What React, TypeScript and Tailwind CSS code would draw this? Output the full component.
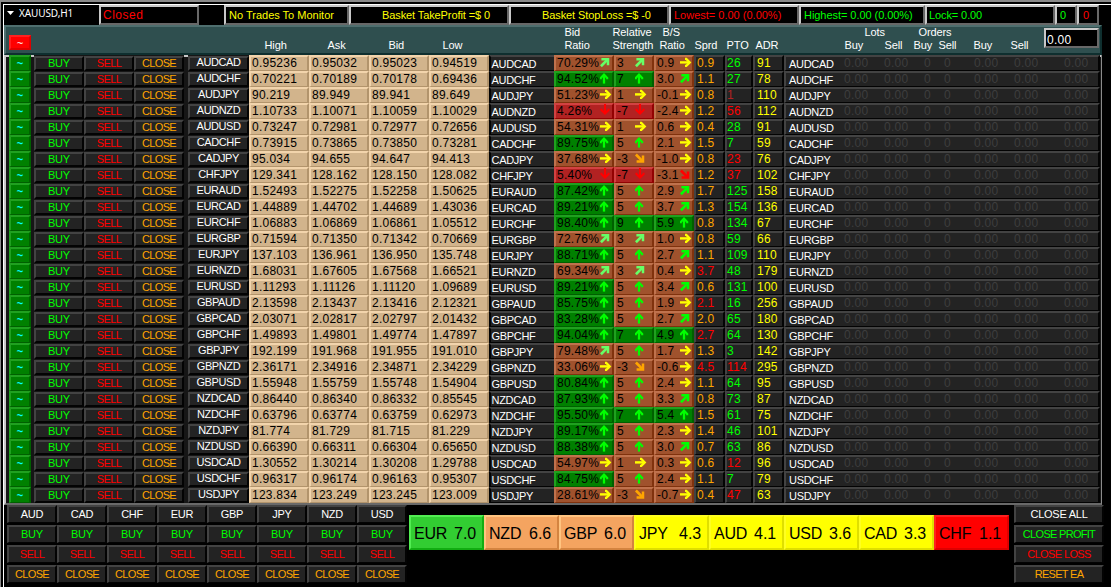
import React from "react";

type Row = [string, string, string, string, string, string, number, string, string, number, number];

const rows: Row[] = [
  ["AUDCAD", "0.95236", "0.95032", "0.95023", "0.94519", "70.29", 3, "0.9", "0.9", 26, 91],
  ["AUDCHF", "0.70221", "0.70189", "0.70178", "0.69436", "94.52", 7, "3.0", "1.1", 27, 78],
  ["AUDJPY", "90.219", "89.949", "89.941", "89.649", "51.23", 1, "-0.1", "0.8", -1, 110],
  ["AUDNZD", "1.10733", "1.10071", "1.10059", "1.10029", "4.26", -7, "-2.4", "1.2", -56, 112],
  ["AUDUSD", "0.73247", "0.72981", "0.72977", "0.72656", "54.31", 1, "0.6", "0.4", 28, 91],
  ["CADCHF", "0.73915", "0.73865", "0.73850", "0.73281", "89.75", 5, "2.1", "1.5", 7, 59],
  ["CADJPY", "95.034", "94.655", "94.647", "94.413", "37.68", -3, "-1.0", "0.8", -23, 76],
  ["CHFJPY", "129.341", "128.162", "128.150", "128.082", "5.40", -7, "-3.1", "1.2", -37, 102],
  ["EURAUD", "1.52493", "1.52275", "1.52258", "1.50625", "87.42", 5, "2.9", "1.7", 125, 158],
  ["EURCAD", "1.44889", "1.44702", "1.44689", "1.43036", "89.21", 5, "3.7", "1.3", 154, 136],
  ["EURCHF", "1.06883", "1.06869", "1.06861", "1.05512", "98.40", 9, "5.9", "0.8", 134, 67],
  ["EURGBP", "0.71594", "0.71350", "0.71342", "0.70669", "72.76", 3, "1.0", "0.8", 59, 66],
  ["EURJPY", "137.103", "136.961", "136.950", "135.748", "88.71", 5, "2.7", "1.1", 109, 110],
  ["EURNZD", "1.68031", "1.67605", "1.67568", "1.66521", "69.34", 3, "0.4", "3.7", 48, 179],
  ["EURUSD", "1.11293", "1.11126", "1.11120", "1.09689", "89.21", 5, "3.4", "0.6", 131, 100],
  ["GBPAUD", "2.13598", "2.13437", "2.13416", "2.12321", "85.75", 5, "1.9", "2.1", 16, 256],
  ["GBPCAD", "2.03071", "2.02817", "2.02797", "2.01432", "83.28", 5, "2.7", "2.0", 65, 180],
  ["GBPCHF", "1.49893", "1.49801", "1.49774", "1.47897", "94.04", 7, "4.9", "2.7", 64, 130],
  ["GBPJPY", "192.199", "191.968", "191.955", "191.010", "79.48", 5, "1.7", "1.3", 3, 142],
  ["GBPNZD", "2.36171", "2.34916", "2.34871", "2.34229", "33.06", -3, "-0.6", "4.5", -114, 295],
  ["GBPUSD", "1.55948", "1.55759", "1.55748", "1.54904", "80.84", 5, "2.4", "1.1", 64, 95],
  ["NZDCAD", "0.86440", "0.86340", "0.86332", "0.85545", "87.93", 5, "3.3", "0.8", 73, 87],
  ["NZDCHF", "0.63796", "0.63774", "0.63759", "0.62973", "95.50", 7, "5.4", "1.5", 61, 75],
  ["NZDJPY", "81.774", "81.729", "81.715", "81.229", "89.17", 5, "2.3", "1.4", 46, 101],
  ["NZDUSD", "0.66390", "0.66311", "0.66304", "0.65650", "88.38", 5, "3.0", "0.7", 63, 86],
  ["USDCAD", "1.30552", "1.30214", "1.30208", "1.29788", "54.97", 1, "0.3", "0.6", -12, 96],
  ["USDCHF", "0.96317", "0.96174", "0.96163", "0.95307", "84.75", 5, "2.4", "1.1", 7, 79],
  ["USDJPY", "123.834", "123.249", "123.245", "123.009", "28.61", -3, "-0.7", "0.4", -47, 63],
];

const GREEN = "bg-[#008000] border-t-[#20a020] border-l-[#20a020] border-r-[#006000] border-b-[#006000]";
const SIENNA = "bg-[#a0522d] border-t-[#c0724d] border-l-[#c0724d] border-r-[#80320d] border-b-[#80320d]";
const BRICK = "bg-[#b22222] border-t-[#d24242] border-l-[#d24242] border-r-[#920202] border-b-[#920202]";
const TAN = "bg-[#d2b48c] border-t-[#f2d4ac] border-l-[#f2d4ac] border-r-[#b2946c] border-b-[#b2946c]";
const DARK = "bg-[#232323] border-t-[#434343] border-l-[#434343] border-r-[#030303] border-b-[#030303]";
const FIELD = "bg-black border-t-[#c8c8c8] border-l-[#c8c8c8] border-r-[#686868] border-b-[#686868]";

type Dir = "up" | "ne" | "right" | "se" | "down";

function Arrow({ dir, color }: { dir: Dir; color: string }) {
  const common = { fill: "none", stroke: color };
  if (dir === "up")
    return (
      <svg width="9" height="11" viewBox="0 0 9 11" className="block shrink-0" {...common}>
        <path d="M4 10.6V2" strokeWidth="2.3" />
        <path d="M0.8 6.2V5L4 1.6L7.2 5V6.2" strokeWidth="2.1" />
      </svg>
    );
  if (dir === "right")
    return (
      <svg width="12" height="11" viewBox="0 0 12 11" className="block shrink-0" {...common}>
        <path d="M0 5.4H9.8" strokeWidth="2.4" />
        <path d="M5 1.9H6.3L9.8 5.4L6.3 8.9H5" strokeWidth="2.2" />
      </svg>
    );
  if (dir === "ne")
    return (
      <svg width="10" height="11" viewBox="0 0 10 11" className="block shrink-0" {...common}>
        <path d="M0.9 9.2L7.5 2.6" strokeWidth="2.7" />
        <path d="M1.4 2.3H8V8.2" strokeWidth="2.5" />
      </svg>
    );
  if (dir === "se")
    return (
      <svg width="10" height="11" viewBox="0 0 10 11" className="block shrink-0" {...common}>
        <path d="M0.9 1.5L7.5 8.1" strokeWidth="2.7" />
        <path d="M1.6 8.4H8V2.4" strokeWidth="2.5" />
      </svg>
    );
  return (
    <svg width="10" height="11" viewBox="0 0 10 11" className="-mt-px block shrink-0" {...common}>
      <path d="M5 0V9" strokeWidth="2" />
      <path d="M1.4 4.8V6L5 9.5L8.6 6V4.8" strokeWidth="2" />
    </svg>
  );
}

const LIME = "#00ff00";
const SOFT = "#66ff66";
const YELLOW = "#ffff00";

function ratioArrow(v: number) {
  if (v > 80) return <Arrow dir="up" color={LIME} />;
  if (v > 60) return <Arrow dir="ne" color={SOFT} />;
  if (v > 10) return <Arrow dir="right" color={YELLOW} />;
  return <Arrow dir="down" color="#ff0000" />;
}
function strengthArrow(v: number) {
  if (v >= 5) return <Arrow dir="up" color={LIME} />;
  if (v >= 3) return <Arrow dir="ne" color={SOFT} />;
  if (v >= 0) return <Arrow dir="right" color={YELLOW} />;
  if (v > -7) return <Arrow dir="se" color="#ffa500" />;
  return <Arrow dir="down" color="#ff0000" />;
}
function balanceArrow(v: number) {
  if (v > 4) return <Arrow dir="up" color={LIME} />;
  if (v > 2.5) return <Arrow dir="ne" color={LIME} />;
  if (v > -3) return <Arrow dir="right" color={YELLOW} />;
  return <Arrow dir="se" color="#ff0000" />;
}

function Cell({ className, children }: { className: string; children?: React.ReactNode }) {
  return (
    <div
      className={`flex h-4 shrink-0 whitespace-nowrap border-t-2 border-r-2 border-b border-l-2 text-[12px] leading-[12px] tracking-[0.25px] ${className}`}
    >
      {children}
    </div>
  );
}

function RowButton({ className, children }: { className: string; children: React.ReactNode }) {
  return (
    <div
      className={`mt-px flex h-[15px] shrink-0 justify-center whitespace-nowrap border-2 text-[11px] leading-[11px] ${DARK} ${className}`}
    >
      {children}
    </div>
  );
}

function PairRow({ row }: { row: Row }) {
  const [pair, high, ask, bid, low, ratio, strength, balance, spread, pto, adr] = row;
  const r = Number(ratio);
  const b = Number(balance);
  return (
    <div className="flex h-4 pl-[3px]">
      <div className={`flex h-4 w-[22px] shrink-0 justify-center border-t-2 border-r-2 border-b border-l-2 text-[11px] leading-[12px] font-bold text-[#00ffff] ${GREEN}`}>
        ~
      </div>
      <div className="ml-[3px] flex shrink-0 bg-[#161616]">
        <RowButton className="w-[50px] tracking-[-0.2px] text-[#00ff00]">BUY</RowButton>
        <RowButton className="w-[50px] tracking-[-0.55px] text-[#ff0000]">SELL</RowButton>
        <RowButton className="w-[50px] tracking-[-0.65px] text-[#ffa500]">CLOSE</RowButton>
      </div>
      <div className="ml-[4px] flex shrink-0 bg-[#161616]">
        <RowButton className="w-[61px] tracking-[-0.4px] text-white">
          <span className="-mt-px">{pair}</span>
        </RowButton>
      </div>
      {[high, ask, bid, low].map((v, i) => (
        <Cell key={i} className={`w-[60px] pl-px text-black ${TAN}`}>
          {v}
        </Cell>
      ))}
      <div className="h-4 w-[65px] shrink-0 border-t-2 border-b border-l-2 border-t-[#434343] border-b-[#030303] border-l-[#030303] bg-[#232323] pt-px pl-[0.5px] text-[11px] leading-[12px] tracking-[-0.3px] text-white">
        {pair}
      </div>
      <Cell className={`w-[60px] pl-px text-black ${r > 80 ? GREEN : r < 10 ? BRICK : SIENNA}`}>
        <span className="w-[43px]">{ratio}%</span>
        {ratioArrow(r)}
      </Cell>
      <Cell className={`w-[40px] pl-px text-black ${strength >= 7 ? GREEN : strength <= -7 ? BRICK : SIENNA}`}>
        <span className="w-[18px]">{strength}</span>
        {strengthArrow(strength)}
      </Cell>
      <Cell className={`w-[40px] pl-px text-black ${b > 4 ? GREEN : SIENNA}`}>
        <span className="w-[23px]">{balance}</span>
        {balanceArrow(b)}
      </Cell>
      <Cell className={`w-[31px] pl-px ${DARK} ${Number(spread) > 2 ? "text-[#ff0000]" : "text-[#ffa500]"}`}>{spread}</Cell>
      <Cell className={`w-[28px] ${DARK} ${pto < -1 ? "text-[#ff0000]" : pto < 0 ? "text-[#b22222]" : "text-[#00ff00]"}`}>
        {Math.abs(pto)}
      </Cell>
      <Cell className={`w-[31px] pl-[2px] text-[#ffff00] ${DARK}`}>{adr}</Cell>
      <Cell className={`w-[316px] pl-[3px] text-[#3e3e3e] ${DARK}`}>
        <span className="w-[55px] pt-px text-[11px] tracking-[-0.3px] text-white">{pair}</span>
        <span className="w-[40px]">0.00</span>
        <span className="w-[40px]">0.00</span>
        <span className="w-[20px]">0</span>
        <span className="w-[30px]">0</span>
        <span className="w-[40px]">0.00</span>
        <span className="w-[50px]">0.00</span>
        <span>0.00</span>
      </Cell>
    </div>
  );
}

const topLabels = [
  ["Bid", "w-[48px]"],
  ["Relative", "w-[50px]"],
  ["B/S", "w-[202px]"],
  ["Lots", "w-[54px]"],
  ["Orders", "w-[60px]"],
];

const columnLabels = [
  ["High", "w-[63px]"],
  ["Ask", "w-[61px]"],
  ["Bid", "w-[54px]"],
  ["Low", "w-[122px]"],
  ["Ratio", "w-[48px]"],
  ["Strength", "w-[47px]"],
  ["Ratio", "w-[35px]"],
  ["Sprd", "w-[32px]"],
  ["PTO", "w-[29px]"],
  ["ADR", "w-[89px]"],
  ["Buy", "w-[40px]"],
  ["Sell", "w-[29px]"],
  ["Buy", "w-[25px]"],
  ["Sell", "w-[35px]"],
  ["Buy", "w-[37px]"],
  ["Sell", "w-[33px]"],
];

const statusFields = [
  ["No Trades To Monitor", "ml-[25px] w-[125px] pl-[3px] text-[#ffff00]"],
  ["Basket TakeProfit =$ 0", "w-[160px] pl-[31px] tracking-[-0.1px] text-[#ffff00]"],
  ["Basket StopLoss =$ -0", "w-[160px] pl-[31px] tracking-[-0.1px] text-[#ffff00]"],
  ["Lowest= 0.00 (0.00%)", "w-[130px] pl-[3px] text-[#ff0000]"],
  ["Highest= 0.00 (0.00%)", "w-[126px] pl-[3px] tracking-[-0.05px] text-[#00ff00]"],
  ["Lock= 0.00", "w-[130px] pl-[2px] tracking-[-0.1px] text-[#00ff00]"],
  ["0", "w-[22px] pl-[3px] text-[#00ff00]"],
  ["0", "w-[22px] pl-[4px] text-[#ff0000]"],
];

const currencies = ["AUD", "CAD", "CHF", "EUR", "GBP", "JPY", "NZD", "USD"];

const meter = [
  ["EUR", "7.0", "bg-[#32cd32] border-t-[#52ed52] border-l-[#52ed52] border-r-[#12ad12] border-b-[#12ad12]"],
  ["NZD", "6.6", "bg-[#f4a460] border-t-[#ffc480] border-l-[#ffc480] border-r-[#d48440] border-b-[#d48440]"],
  ["GBP", "6.0", "bg-[#f4a460] border-t-[#ffc480] border-l-[#ffc480] border-r-[#d48440] border-b-[#d48440]"],
  ["JPY", "4.3", "bg-[#ffff00] border-t-[#ffff20] border-l-[#ffff20] border-r-[#dfdf00] border-b-[#dfdf00]"],
  ["AUD", "4.1", "bg-[#ffff00] border-t-[#ffff20] border-l-[#ffff20] border-r-[#dfdf00] border-b-[#dfdf00]"],
  ["USD", "3.6", "bg-[#ffff00] border-t-[#ffff20] border-l-[#ffff20] border-r-[#dfdf00] border-b-[#dfdf00]"],
  ["CAD", "3.3", "bg-[#ffff00] border-t-[#ffff20] border-l-[#ffff20] border-r-[#dfdf00] border-b-[#dfdf00]"],
  ["CHF", "1.1", "bg-[#ff0000] border-t-[#ff2020] border-l-[#ff2020] border-r-[#df0000] border-b-[#df0000]"],
];

function FooterButton({ className, children }: { className: string; children: React.ReactNode }) {
  return (
    <div
      className={`flex h-[18px] justify-center whitespace-nowrap border-2 border-b-[1px] text-[11px] leading-[14px] ${DARK} ${className}`}
    >
      {children}
    </div>
  );
}

export default function App() {
  return (
    <div className="h-[587px] w-[1111px] overflow-hidden border-t-2 border-l border-t-[#8a8a8a] border-l-[#8a8a8a] bg-black pt-[2px] pl-[2px] font-['Liberation_Sans',Arial,sans-serif]">
      <div className="h-[583px] border-t border-l border-white">
        <header className="flex h-5">
          <div className="flex w-[95px] items-start gap-[5px] pt-[2px] pl-[3px]">
            <svg width="7" height="4" viewBox="0 0 7 4" className="mt-[4px] shrink-0">
              <path d="M0 0H7L3.5 4Z" fill="#fff" />
            </svg>
            <span className="font-['Noto_Sans',sans-serif] text-[10px] leading-[12px] tracking-[-0.1px] text-white">XAUUSD,H1</span>
          </div>
          <div className={`h-5 w-[100px] border-2 pl-[2px] text-[12px] leading-[17px] tracking-[0.5px] text-[#ff0000] ${FIELD}`}>Closed</div>
          {statusFields.map(([text, cls], i) => (
            <div key={i} className={`h-5 shrink-0 whitespace-pre border-2 text-[11px] leading-[17px] ${FIELD} ${cls}`}>
              {text}
            </div>
          ))}
        </header>

        <section className="flex h-[30px] w-[1098px] border-2 border-t-[#4f6f6f] border-r-[#0f2f2f] border-b-[#0f2f2f] border-l-[#4f6f6f] bg-[#2f4f4f] text-[11px] text-white">
          <div className="mt-[8px] ml-[3px] flex h-[15px] w-[22px] shrink-0 justify-center border-2 border-t-[#ff2020] border-r-[#df0000] border-b-[#df0000] border-l-[#ff2020] bg-[#ff0000] leading-[12px]">
            ~
          </div>
          <div className="ml-[233px] w-[780px] shrink-0 pl-[0.5px]">
            <div className="flex h-[13px] pl-[300px] leading-[11px] tracking-[-0.1px]">
              {topLabels.map(([text, w], i) => (
                <span key={i} className={`shrink-0 ${w}`}>
                  {text}
                </span>
              ))}
            </div>
            <div className="flex h-[13px] leading-[11px] tracking-[-0.1px]">
              {columnLabels.map(([text, w], i) => (
                <span key={i} className={`shrink-0 ${w}`}>
                  {text}
                </span>
              ))}
            </div>
          </div>
          <div className={`mt-px h-5 w-[55px] shrink-0 border-2 pl-px text-[12px] leading-[20px] tracking-[0.25px] ${FIELD}`}>0.00</div>
        </section>

        <main className="h-[450px] w-[1098px] border-r border-b-2 border-l-2 border-r-[#8a8a8a] border-b-[#696969] border-l-[#c8c8c8] bg-[#161616] bg-[linear-gradient(#c8c8c8_2px,transparent_2px)]">
          {rows.map((row) => (
            <PairRow key={row[0]} row={row} />
          ))}
        </main>

        <footer className="flex pl-[3px]">
          <div className="grid w-[400px] shrink-0 grid-cols-8 gap-y-[2px]">
            {currencies.map((c) => (
              <FooterButton key={c} className="tracking-[-0.3px] text-white">{c}</FooterButton>
            ))}
            {currencies.map((c) => (
              <FooterButton key={c} className="tracking-[-0.2px] text-[#00ff00]">BUY</FooterButton>
            ))}
            {currencies.map((c) => (
              <FooterButton key={c} className="tracking-[-0.55px] text-[#ff0000]">SELL</FooterButton>
            ))}
            {currencies.map((c) => (
              <FooterButton key={c} className="tracking-[-0.65px] text-[#ffa500]">CLOSE</FooterButton>
            ))}
          </div>
          <div className="mt-[10px] ml-[2px] flex h-[35px] w-[600px] shrink-0 text-[16px] leading-[33px] text-black">
            {meter.map(([name, value, tone]) => (
              <div key={name} className={`flex w-[75px] border-2 pl-[3px] ${tone}`}>
                <span className="w-[40px] tracking-[-0.2px]">{name}</span>
                <span>{value}</span>
              </div>
            ))}
          </div>
          <div className="ml-[5px] flex w-[90px] shrink-0 flex-col gap-[2px]">
            <FooterButton className="tracking-[-0.25px] text-white">CLOSE ALL</FooterButton>
            <FooterButton className="tracking-[-0.7px] text-[#00ff00]">CLOSE PROFIT</FooterButton>
            <FooterButton className="tracking-[-0.6px] text-[#ff0000]">CLOSE LOSS</FooterButton>
            <FooterButton className="tracking-[-0.7px] text-[#ffa500]">RESET EA</FooterButton>
          </div>
        </footer>
      </div>
    </div>
  );
}
